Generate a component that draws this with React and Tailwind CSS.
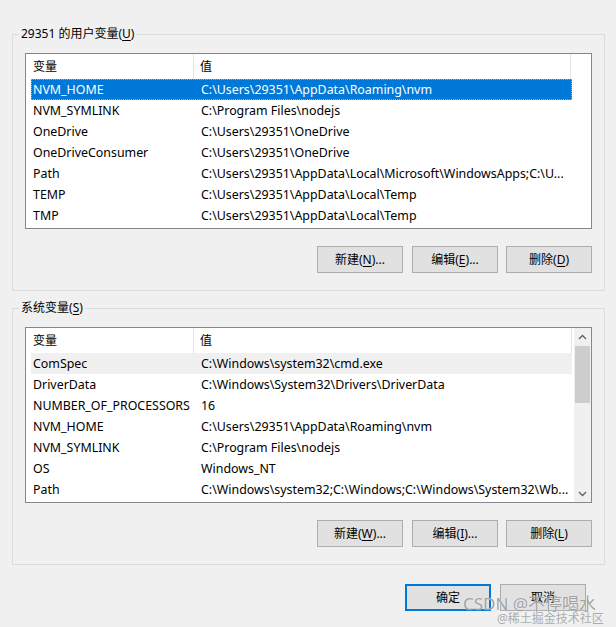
import React from "react";

const userVars = [
  ["NVM_HOME", "C:\\Users\\29351\\AppData\\Roaming\\nvm"],
  ["NVM_SYMLINK", "C:\\Program Files\\nodejs"],
  ["OneDrive", "C:\\Users\\29351\\OneDrive"],
  ["OneDriveConsumer", "C:\\Users\\29351\\OneDrive"],
  ["Path", "C:\\Users\\29351\\AppData\\Local\\Microsoft\\WindowsApps;C:\\U..."],
  ["TEMP", "C:\\Users\\29351\\AppData\\Local\\Temp"],
  ["TMP", "C:\\Users\\29351\\AppData\\Local\\Temp"],
];

const sysVars = [
  ["ComSpec", "C:\\Windows\\system32\\cmd.exe"],
  ["DriverData", "C:\\Windows\\System32\\Drivers\\DriverData"],
  ["NUMBER_OF_PROCESSORS", "16"],
  ["NVM_HOME", "C:\\Users\\29351\\AppData\\Roaming\\nvm"],
  ["NVM_SYMLINK", "C:\\Program Files\\nodejs"],
  ["OS", "Windows_NT"],
  ["Path", "C:\\Windows\\system32;C:\\Windows;C:\\Windows\\System32\\Wb..."],
];

function Btn({ pre, k, post, className = "" }) {
  return (
    <button
      className={
        "w-[86px] h-[27px] bg-[#e1e1e1] border border-[#adadad] flex items-center justify-center text-[12px] text-black leading-none " +
        className
      }
    >
      <span>
        {pre}(<span className="underline underline-offset-2">{k}</span>){post}
      </span>
    </button>
  );
}

function Header({ scroll }) {
  return (
    <div className="flex h-[25px] bg-white">
      <div className="w-[168px] h-full border-r border-[#e5e5e5] flex items-center pl-[7px]">变量</div>
      <div
        className={
          "h-full flex items-center pl-[6px] border-r border-[#e5e5e5] " +
          (scroll ? "w-[378px]" : "w-[377px]")
        }
      >
        值
      </div>
    </div>
  );
}

function Row({ name, value, selected, inactive }) {
  let cls = "flex h-[21px] items-center pt-[1px] ml-[5px] w-[541px] text-[12.4px] ";
  if (selected) cls += "bg-[#0078d7] text-white outline outline-1 outline-dotted outline-[#f59a3c] -outline-offset-1";
  else if (inactive) cls += "bg-[#f0f0f0]";
  return (
    <div className={cls}>
      <div className="w-[164px] pl-[2px] whitespace-nowrap overflow-hidden">{name}</div>
      <div className="flex-1 pl-[6px] whitespace-nowrap overflow-hidden">{value}</div>
    </div>
  );
}

function Chevron({ up }) {
  return (
    <svg width="9" height="6" viewBox="0 0 9 6">
      <path
        d={up ? "M1 5 L4.5 1.5 L8 5" : "M1 1 L4.5 4.5 L8 1"}
        fill="none"
        stroke="#606060"
        strokeWidth="1.3"
      />
    </svg>
  );
}

function ListBox({ rows, scroll, first }) {
  return (
    <div className="w-[567px] h-[176px] border border-[#828790] bg-white flex">
      <div className="flex-1 flex flex-col">
        <Header scroll={scroll} />
        {rows.map((r, i) => (
          <Row
            key={i}
            name={r[0]}
            value={r[1]}
            selected={first && i === 0}
            inactive={!first && i === 0}
          />
        ))}
      </div>
      {scroll && (
        <div className="w-[17px] h-full bg-[#f0f0f0] flex flex-col items-center">
          <div className="h-[17px] flex items-center justify-center">
            <Chevron up />
          </div>
          <div className="w-[15px] h-[57px] bg-[#cdcdcd] mt-[1px]" />
          <div className="flex-1" />
          <div className="h-[17px] flex items-center justify-center">
            <Chevron />
          </div>
        </div>
      )}
    </div>
  );
}

function Group({ label, k, children, className = "" }) {
  return (
    <fieldset className={"w-[592px] border border-[#dcdcdc] px-[12px] pb-[17px] " + className}>
      <legend className="-ml-[6px] px-[2px] h-[16px] leading-[16px]">
        {label}(<span className="underline underline-offset-2">{k}</span>)
      </legend>
      {children}
    </fieldset>
  );
}

export default function App() {
  return (
    <div className="w-[616px] h-[627px] bg-[#f0f0f0] relative overflow-hidden text-[12px] text-black font-['Noto_Sans','Noto_Sans_CJK_SC',sans-serif]">
      <div className="pt-[26px] pl-[12px] flex flex-col">
        <Group label="29351 的用户变量" k="U">
          <div className="mt-[11px]">
            <ListBox rows={userVars} first />
          </div>
          <div className="flex justify-end mt-[17px]">
            <Btn pre="新建" k="N" post="..." />
            <Btn pre="编辑" k="E" post="..." className="ml-[9px]" />
            <Btn pre="删除" k="D" post="" className="ml-[8px]" />
          </div>
        </Group>
        <Group label="系统变量" k="S" className="mt-[9px]">
          <div className="mt-[11px]">
            <ListBox rows={sysVars} scroll />
          </div>
          <div className="flex justify-end mt-[17px]">
            <Btn pre="新建" k="W" post="..." />
            <Btn pre="编辑" k="I" post="..." className="ml-[9px]" />
            <Btn pre="删除" k="L" post="" className="ml-[8px]" />
          </div>
        </Group>
        <div className="flex mt-[19px] pl-[393px]">
          <button className="w-[86px] h-[27px] bg-[#e1e1e1] border-2 border-[#0078d7] flex items-center justify-center">确定</button>
          <button className="w-[86px] h-[27px] bg-[#e1e1e1] border border-[#adadad] flex items-center justify-center ml-[9px]">取消</button>
        </div>
      </div>
      <div className="absolute left-[463px] top-[594px] text-[17px] leading-[20px] text-[#8a8a8a]/80 whitespace-nowrap [text-shadow:0_0_1px_#fff]">
        CSDN @不停喝水
      </div>
      <div className="absolute left-[497px] top-[612px] text-[12px] leading-[14px] text-[#9a9a9a]/80 whitespace-nowrap">
        @稀土掘金技术社区
      </div>
    </div>
  );
}
